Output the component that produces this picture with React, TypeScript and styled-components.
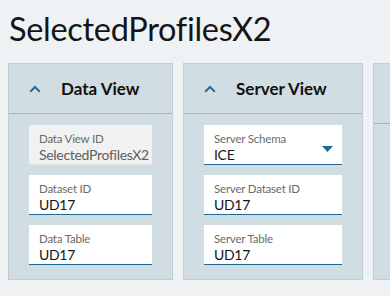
import * as React from 'react';
import styled, { createGlobalStyle } from 'styled-components';

const Global = createGlobalStyle`
  html, body {
    margin: 0;
    padding: 0;
    background: #eef2f5;
    font-family: Lato, "Open Sans", sans-serif;
    overflow: hidden;
  }
`;

const Page = styled.div`
  padding: 0 0 0 8px;
  width: 390px;
  height: 296px;
  box-sizing: border-box;
  overflow: hidden;
`;

const Title = styled.h1`
  margin: 0;
  padding: 9px 0 0 1px;
  height: 63px;
  box-sizing: border-box;
  font-size: 32.5px;
  font-weight: 400;
  color: #151515;
  letter-spacing: -0.3px;
`;

const Row = styled.div`
  display: flex;
  gap: 10px;
  align-items: flex-start;
`;

const Panel = styled.div<{ $w: number }>`
  flex: 0 0 auto;
  width: ${(p) => p.$w}px;
  height: 217px;
  box-sizing: border-box;
  background: #d0dde2;
  border: 1px solid #c3ccd0;
`;

const Header = styled.div<{ $h?: number }>`
  display: flex;
  align-items: center;
  height: ${(p) => p.$h ?? 49}px;
  border-bottom: 1px solid #8fbdcf;
  padding-left: 20px;
  gap: 20px;
`;

const HeaderTitle = styled.span`
  font-size: 17px;
  font-weight: 700;
  color: #111;
`;

const Body = styled.div`
  display: flex;
  flex-direction: column;
  gap: 10px;
  padding: 11px 20px 0 20px;
`;

const Field = styled.div<{ $disabled?: boolean }>`
  position: relative;
  height: 40px;
  box-sizing: border-box;
  padding: 6px 10px 0 10px;
  background: ${(p) => (p.$disabled ? '#f1f1f1' : '#ffffff')};
  border-bottom: 1px solid ${(p) => (p.$disabled ? '#e4e4e4' : '#1d6a96')};
`;

const Label = styled.div`
  font-size: 11.5px;
  line-height: 15px;
  letter-spacing: -0.2px;
  color: #6b6b6b;
`;

const Value = styled.div<{ $disabled?: boolean }>`
  font-size: 14px;
  line-height: 17px;
  letter-spacing: -0.3px;
  white-space: nowrap;
  color: ${(p) => (p.$disabled ? '#5e5e5e' : '#141414')};
`;

const Caret = styled.svg`
  position: absolute;
  right: 9px;
  top: 21px;
`;

const Chevron = () => (
  <svg width="12" height="8" viewBox="0 0 12 8">
    <path d="M1.2 6.8 L6 2 L10.8 6.8" fill="none" stroke="#1f6f9c" strokeWidth="2" />
  </svg>
);

type FieldData = { label: string; value: string; disabled?: boolean; select?: boolean };

const panels: { title: string; w: number; fields: FieldData[] }[] = [
  {
    title: 'Data View',
    w: 165,
    fields: [
      { label: 'Data View ID', value: 'SelectedProfilesX2', disabled: true },
      { label: 'Dataset ID', value: 'UD17' },
      { label: 'Data Table', value: 'UD17' },
    ],
  },
  {
    title: 'Server View',
    w: 180,
    fields: [
      { label: 'Server Schema', value: 'ICE', select: true },
      { label: 'Server Dataset ID', value: 'UD17' },
      { label: 'Server Table', value: 'UD17' },
    ],
  },
];

export default function App() {
  return (
    <Page>
      <Global />
      <Title>SelectedProfilesX2</Title>
      <Row>
        {panels.map((p) => (
          <Panel key={p.title} $w={p.w}>
            <Header>
              <Chevron />
              <HeaderTitle>{p.title}</HeaderTitle>
            </Header>
            <Body>
              {p.fields.map((f) => (
                <Field key={f.label} $disabled={f.disabled}>
                  <Label>{f.label}</Label>
                  <Value $disabled={f.disabled}>{f.value}</Value>
                  {f.select && (
                    <Caret width="11" height="6" viewBox="0 0 11 6">
                      <path d="M0 0 H11 L5.5 6 Z" fill="#1d6a96" />
                    </Caret>
                  )}
                </Field>
              ))}
            </Body>
          </Panel>
        ))}
        <Panel $w={180}>
          <Header $h={59} />
        </Panel>
      </Row>
    </Page>
  );
}
